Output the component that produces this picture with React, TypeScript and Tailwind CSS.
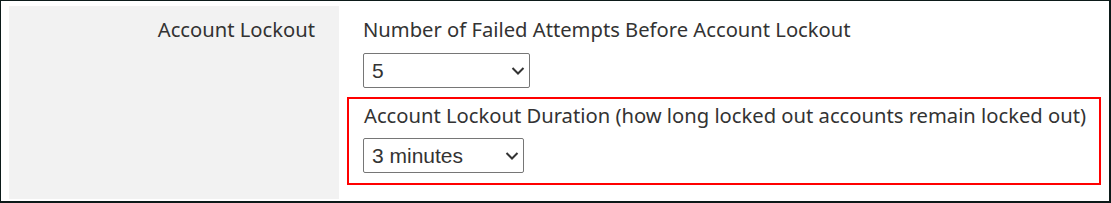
import React from "react";

function Chevron() {
  return (
    <svg
      width="14"
      height="9"
      viewBox="0 0 14 9"
      className="pointer-events-none absolute right-[5px] top-1/2 -translate-y-1/2"
    >
      <path d="M1.5 1.5 L7 7 L12.5 1.5" fill="none" stroke="#333" strokeWidth="2" />
    </svg>
  );
}

interface DropdownProps {
  value: string;
  options: string[];
  width: string;
}

function Dropdown({ value, options, width }: DropdownProps) {
  return (
    <div className={`relative ${width} h-[35px]`}>
      <select
        defaultValue={value}
        className="appearance-none w-full h-full border border-[#767676] rounded-[2px] bg-white pl-[8px] pr-7 text-[21px] text-[#333] font-['Liberation_Sans',Arial,sans-serif] outline-none"
      >
        {options.map((o) => (
          <option key={o}>{o}</option>
        ))}
      </select>
      <Chevron />
    </div>
  );
}

export default function App() {
  return (
    <div className="w-[1111px] h-[203px] border-l border-t border-r-2 border-b-2 border-[#0c1a19] bg-white pl-2 pt-[5px] pb-[2px] flex font-['Noto_Sans',sans-serif] text-[20.2px] leading-[26px] text-[#333]">
      <div className="w-[330px] bg-[#f2f2f2] text-right pr-6 pt-[10px]">Account Lockout</div>
      <div className="flex-1 px-2 pt-[10px]">
        <div className="pl-4">Number of Failed Attempts Before Account Lockout</div>
        <div className="pl-4 mt-[11px]">
          <Dropdown value="5" options={["1", "2", "3", "4", "5", "10"]} width="w-[167px]" />
        </div>
        <div className="mt-[9px] border-2 border-[#ff0000] pl-[14px] pt-[3px] pb-[10px]">
          <div className="pl-px">Account Lockout Duration (how long locked out accounts remain locked out)</div>
          <div className="mt-[10px]">
            <Dropdown
              value="3 minutes"
              options={["1 minute", "3 minutes", "5 minutes", "10 minutes"]}
              width="w-[161px]"
            />
          </div>
        </div>
      </div>
    </div>
  );
}
